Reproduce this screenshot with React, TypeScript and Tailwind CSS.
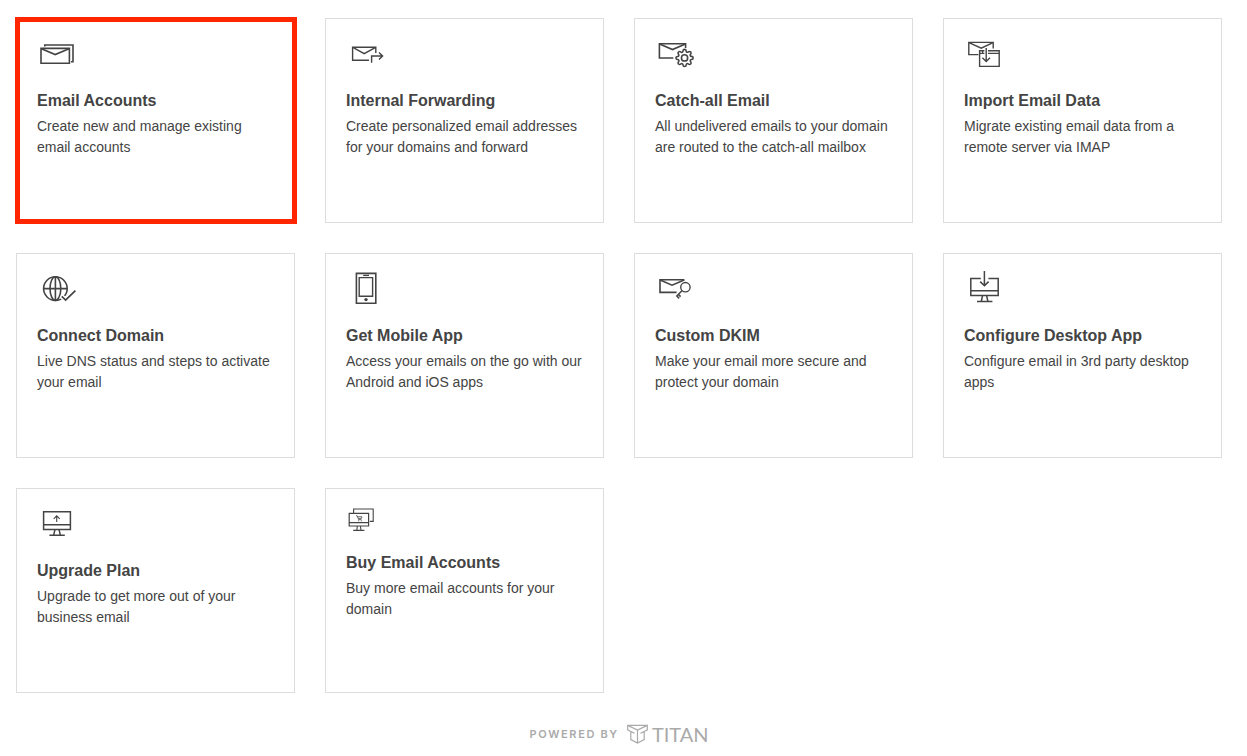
import type { ReactNode } from "react";

type Tool = {
  id: string;
  title: string;
  description: string;
  icon: ReactNode;
  iconHeight?: number;
  highlighted?: boolean;
};

const Icon = ({ children, height = 40 }: { children: ReactNode; height?: number }) => (
  <svg
    width={40}
    height={height}
    viewBox={`0 0 40 ${height}`}
    fill="none"
    stroke="#444"
    strokeWidth={1.6}
    aria-hidden="true"
  >
    {children}
  </svg>
);

const tools: Tool[] = [
  {
    id: "email-accounts",
    title: "Email Accounts",
    description: "Create new and manage existing email accounts",
    highlighted: true,
    icon: (
      <>
        <path d="M7.8 12.6V11H36v16.8h-2" />
        <path d="M4 14.4h28.4v14.8H4z" />
        <path d="M4.4 14.8L18.2 20.6L32 14.8" />
      </>
    ),
  },
  {
    id: "internal-forwarding",
    title: "Internal Forwarding",
    description: "Create personalized email addresses for your domains and forward",
    icon: (
      <>
        <path d="M23 26.2H6.6V13.2H29.8V19" strokeWidth={1.4} />
        <path d="M6.8 13.4L18.2 19.6L29.6 13.4" strokeWidth={1.4} />
        <path d="M25.6 28.8V22H36.6M33 18.4L36.6 22L33 25.6" strokeWidth={1.4} />
      </>
    ),
  },
  {
    id: "catch-all",
    title: "Catch-all Email",
    description: "All undelivered emails to your domain are routed to the catch-all mailbox",
    icon: (
      <>
        <path d="M18.4 24H4.4V9.8H30.6V14" />
        <path d="M4.6 10L17.5 15.6L30.4 10" />
        <g transform="translate(20.2 14.6) scale(0.78)" strokeWidth={2}>
          <path d="M19.4 15a1.65 1.65 0 0 0 .33 1.82l.06.06a2 2 0 0 1 0 2.83 2 2 0 0 1-2.83 0l-.06-.06a1.65 1.65 0 0 0-1.82-.33 1.65 1.65 0 0 0-1 1.51V21a2 2 0 0 1-2 2 2 2 0 0 1-2-2v-.09A1.65 1.65 0 0 0 9 19.4a1.65 1.65 0 0 0-1.82.33l-.06.06a2 2 0 0 1-2.83 0 2 2 0 0 1 0-2.83l.06-.06a1.65 1.65 0 0 0 .33-1.82 1.65 1.65 0 0 0-1.51-1H3a2 2 0 0 1-2-2 2 2 0 0 1 2-2h.09A1.65 1.65 0 0 0 4.6 9a1.65 1.65 0 0 0-.33-1.82l-.06-.06a2 2 0 0 1 0-2.83 2 2 0 0 1 2.83 0l.06.06a1.65 1.65 0 0 0 1.82.33H9a1.65 1.65 0 0 0 1-1.51V3a2 2 0 0 1 2-2 2 2 0 0 1 2 2v.09a1.65 1.65 0 0 0 1 1.51 1.65 1.65 0 0 0 1.82-.33l.06-.06a2 2 0 0 1 2.83 0 2 2 0 0 1 0 2.83l-.06.06a1.65 1.65 0 0 0-.33 1.82V9a1.65 1.65 0 0 0 1.51 1H21a2 2 0 0 1 2 2 2 2 0 0 1-2 2h-.09a1.65 1.65 0 0 0-1.51 1z" />
          <circle cx="12" cy="12" r="4" />
        </g>
      </>
    ),
  },
  {
    id: "import-data",
    title: "Import Email Data",
    description: "Migrate existing email data from a remote server via IMAP",
    icon: (
      <>
        <path d="M14.4 20.6H4.8V8.4H29.2V14.6" strokeWidth={1.4} />
        <path d="M5 8.6L17.2 14.2L29 8.6" strokeWidth={1.4} />
        <path d="M20.4 16.8H15.6V32.4H35.2V16.8H24" strokeWidth={1.4} />
        <path d="M15.6 19.4H20.4M24 19.4H35.2M18.6 17V19.4" strokeWidth={1.2} />
        <path d="M22.2 14V27.4M18.4 23.8L22.2 27.6L26 23.8" strokeWidth={1.4} />
      </>
    ),
  },
  {
    id: "connect-domain",
    title: "Connect Domain",
    description: "Live DNS status and steps to activate your email",
    icon: (
      <>
        <circle cx="18.4" cy="19.6" r="11.8" />
        <ellipse cx="18.4" cy="19.6" rx="5.4" ry="11.8" />
        <path d="M18.4 7.8V31.4M6.6 19.6H30.2" />
        <path d="M24 26.6L28.6 31L38.6 21.4" stroke="#fff" strokeWidth={4.6} />
        <path d="M24.8 27.4L28.6 31L38.4 21.6" strokeWidth={1.7} />
      </>
    ),
  },
  {
    id: "mobile-app",
    title: "Get Mobile App",
    description: "Access your emails on the go with our Android and iOS apps",
    icon: (
      <>
        <path d="M10.4 4.4H29.8V34.2H10.4z" />
        <path d="M13.2 8.6H26.6V27.2H13.2z" strokeWidth={1.4} />
        <path d="M17.2 6.4H23" strokeWidth={1.4} />
        <circle cx="20" cy="30.6" r="1.7" fill="#444" stroke="none" />
      </>
    ),
  },
  {
    id: "custom-dkim",
    title: "Custom DKIM",
    description: "Make your email more secure and protect your domain",
    icon: (
      <>
        <path d="M21.6 23.4H5V10.8H29.4" />
        <path d="M5.2 11L17 16.2L29.2 11" strokeWidth={1.4} />
        <circle cx="30.4" cy="18.2" r="4.7" strokeWidth={1.4} />
        <path d="M27.2 21.4L21.8 27L24.2 29.4M23.4 25.4L25.6 27.6" strokeWidth={1.5} />
      </>
    ),
  },
  {
    id: "desktop-app",
    title: "Configure Desktop App",
    description: "Configure email in 3rd party desktop apps",
    icon: (
      <>
        <path d="M16.8 9.4H6.8V26.4H34.2V9.4H24.4M6.8 21.8H34.2" strokeWidth={1.5} />
        <path d="M18.6 26.4L17.4 32M22.6 26.4L23.8 32M13 32.4H28.4" strokeWidth={1.5} />
        <path d="M20.4 2V16.6M16.2 12.6L20.4 16.8L24.6 12.6" strokeWidth={1.5} />
      </>
    ),
  },
  {
    id: "upgrade-plan",
    title: "Upgrade Plan",
    description: "Upgrade to get more out of your business email",
    icon: (
      <>
        <path d="M6.6 7.8H33.4V25.4H6.6zM6.6 20.8H33.4" strokeWidth={1.5} />
        <path d="M18 25.4L16.8 30.6M22 25.4L23.2 30.6M12.4 31.2H27.8" strokeWidth={1.5} />
        <path d="M19.7 18V11.8M16.7 14.8L19.7 11.8L22.7 14.8" strokeWidth={1.1} />
      </>
    ),
  },
  {
    id: "buy-accounts",
    title: "Buy Email Accounts",
    description: "Buy more email accounts for your domain",
    iconHeight: 32,
    icon: (
      <>
        <path d="M7.6 9V5H27.2V17.4H23.8" strokeWidth={1.1} />
        <path d="M3.2 9.4H22.6V22H3.2zM3.2 18.7H22.6" strokeWidth={1.2} />
        <path d="M11.4 22L10.8 26M14.4 22L15 26M7.2 26.4H18.4" strokeWidth={1.1} />
        <path d="M10 11.8H11.2L12.6 15.6H15.4M11.6 12.8H16L15.2 14.6H12.4" strokeWidth={0.8} />
        <path d="M12.2 16.8H13.2M14.8 16.8H15.8" strokeWidth={0.9} />
      </>
    ),
  },
];

const ToolCard = ({ tool }: { tool: Tool }) => (
  <a
    href={`#${tool.id}`}
    className="relative block min-h-[205px] border border-[#ddd] bg-white px-5 pt-[15px] pb-5 text-[#444]"
  >
    <Icon height={tool.iconHeight}>{tool.icon}</Icon>
    <h2 className="mt-[15px] text-base font-bold">{tool.title}</h2>
    <p className="mt-[3px] text-sm leading-[21px]">{tool.description}</p>
    {tool.highlighted && (
      <span className="pointer-events-none absolute -top-0.5 -right-[3px] -bottom-0.5 -left-0.5 border-5 border-[#ff2600]" />
    )}
  </a>
);

const App = () => {
  return (
    <div className="bg-white pt-[18px] pr-[25px] pb-2 pl-4 font-['Liberation_Sans',Arial,sans-serif]">
      <main className="grid grid-cols-1 gap-[30px] sm:grid-cols-2 lg:grid-cols-4">
        {tools.map((tool) => (
          <ToolCard tool={tool} key={tool.id} />
        ))}
      </main>
      <footer className="mt-[29px] flex items-center justify-center text-[#aaa]">
        <span className="font-['Inter',sans-serif] text-[11px] font-semibold tracking-[0.15em]">POWERED BY</span>
        <svg
          className="ml-2"
          width={21}
          height={20}
          viewBox="0 0 21 20"
          fill="none"
          stroke="currentColor"
          strokeWidth={1.2}
          aria-hidden="true"
        >
          <path d="M.7 1.4H20.3V5.8L17.2 7.6V15.6L10.5 19L3.8 15.6V7.6L.7 5.8z" />
          <path d="M.7 1.4L10.5 6L20.3 1.4M3.8 7.6L7.6 9.2M17.2 7.6L13.4 9.2M10.5 6V19" />
        </svg>
        <span className="ml-1 font-['Lato',sans-serif] text-xl leading-6">TITAN</span>
      </footer>
    </div>
  );
};

export default App;
